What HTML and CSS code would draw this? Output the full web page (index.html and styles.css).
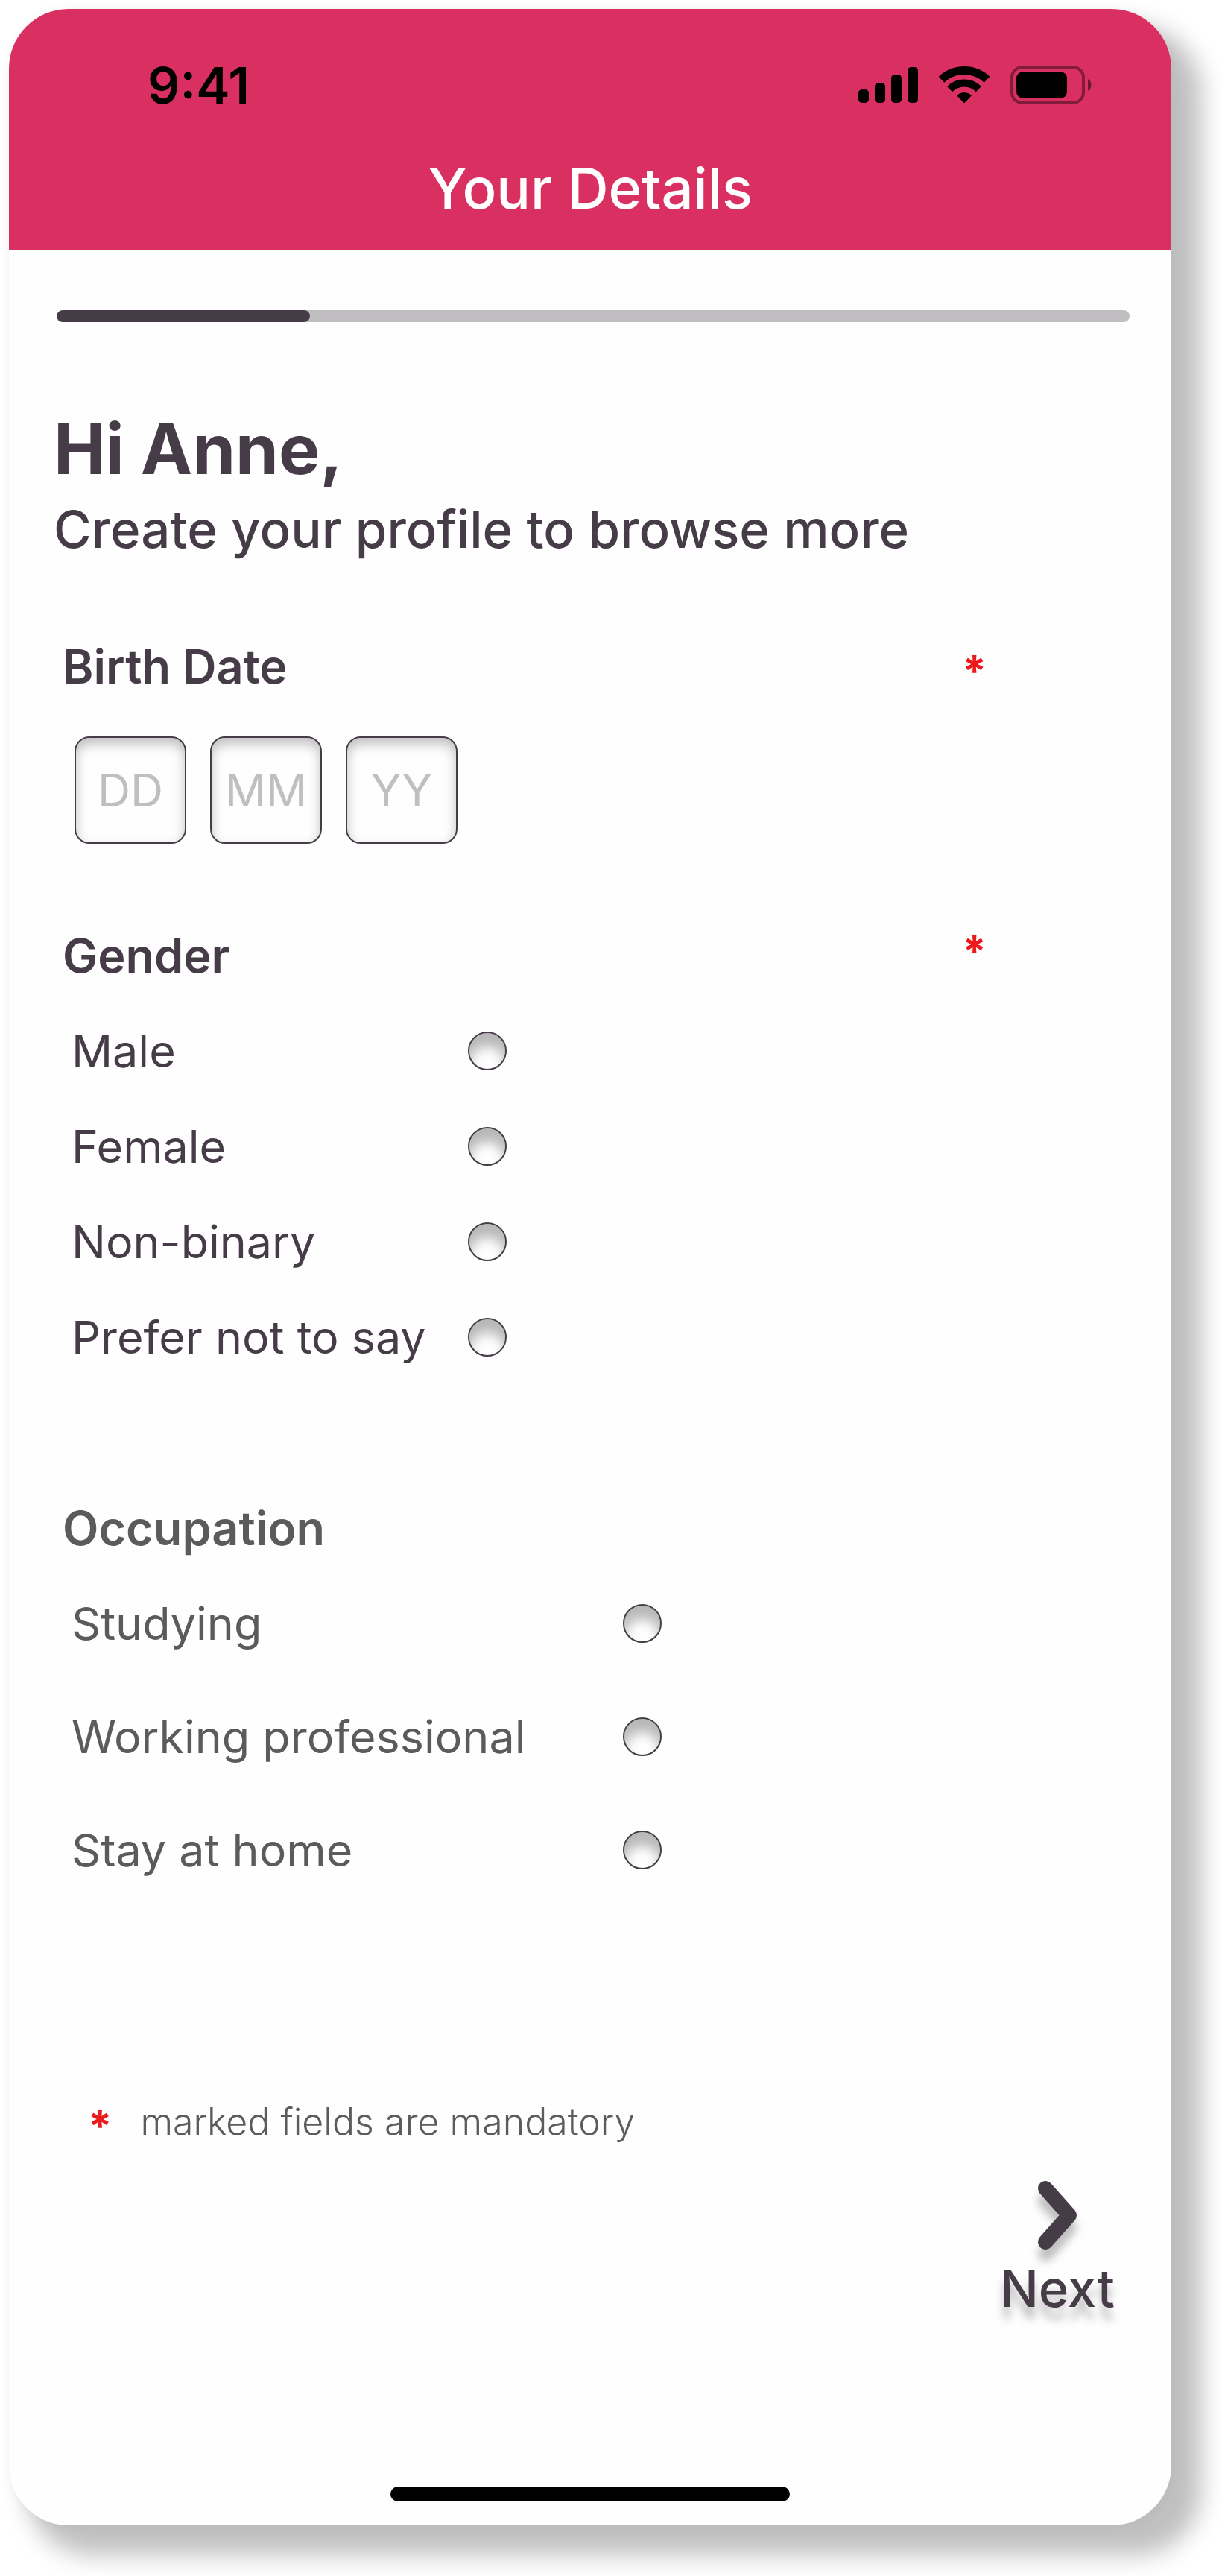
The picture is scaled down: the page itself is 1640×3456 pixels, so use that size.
FILE: index.html
```html
<!DOCTYPE html>
<html lang="en">
  <head>
    <meta charset="utf-8" />
    <title>Your Details</title>
    <meta name="viewport" content="width=device-width, initial-scale=1" />
    <link rel="stylesheet" href="styles.css" />
  </head>
  <body>
    <div class="screen">
      <header class="header">
        <div class="status-bar">
          <span class="time">9:41</span>
          <svg class="status-icons" width="316" height="52" viewBox="0 0 316 52">
            <!-- signal -->
            <rect x="0" y="32" width="14" height="18" rx="5" />
            <rect x="22" y="23" width="14" height="27" rx="5" />
            <rect x="44" y="12" width="14" height="38" rx="5" />
            <rect x="66" y="2" width="14" height="48" rx="5" />
            <!-- wifi -->
            <path d="M111.500 18.700A44.500 44.500 0 0 1 172.500 18.700" fill="none" stroke="#000" stroke-width="11" />
            <path d="M122.600 31.600A27.500 27.500 0 0 1 161.400 31.600" fill="none" stroke="#000" stroke-width="10" />
            <path d="M142 50L132.500 40A15 15 0 0 1 151.500 40Z" stroke="#000" stroke-width="1" stroke-linejoin="round" />
            <!-- battery -->
            <rect x="206" y="2" width="96" height="48" rx="14" fill="none" stroke="#000" stroke-width="4" opacity="0.4" />
            <path d="M308 18c6 3 6 13 0 16z" opacity="0.5" />
            <rect x="212" y="8" width="68" height="36" rx="9" />
          </svg>
        </div>
        <h1 class="title">Your Details</h1>
      </header>

      <form class="content">
        <progress class="progress" value="17" max="72" aria-label="Profile progress"></progress>

        <h2 class="greeting">Hi Anne,</h2>
        <p class="intro">Create your profile to browse more</p>

        <section class="field">
          <div class="field-head">
            <h3 id="birth">Birth Date</h3>
            <span class="required">*</span>
          </div>
          <div class="date" role="group" aria-labelledby="birth">
            <input type="text" placeholder="DD" maxlength="2" aria-label="Day" />
            <input type="text" placeholder="MM" maxlength="2" aria-label="Month" />
            <input type="text" placeholder="YY" maxlength="2" aria-label="Year" />
          </div>
        </section>

        <section class="field gender" role="radiogroup" aria-labelledby="gender">
          <div class="field-head">
            <h3 id="gender">Gender</h3>
            <span class="required">*</span>
          </div>
          <div class="option">
            <label for="male">Male</label>
            <input type="radio" name="gender" id="male" />
          </div>
          <div class="option">
            <label for="female">Female</label>
            <input type="radio" name="gender" id="female" />
          </div>
          <div class="option">
            <label for="nonbinary">Non-binary</label>
            <input type="radio" name="gender" id="nonbinary" />
          </div>
          <div class="option">
            <label for="private">Prefer not to say</label>
            <input type="radio" name="gender" id="private" />
          </div>
        </section>

        <section class="field occupation" role="radiogroup" aria-labelledby="occupation">
          <div class="field-head">
            <h3 id="occupation">Occupation</h3>
          </div>
          <div class="option">
            <label for="studying">Studying</label>
            <input type="radio" name="occupation" id="studying" />
          </div>
          <div class="option">
            <label for="working">Working professional</label>
            <input type="radio" name="occupation" id="working" />
          </div>
          <div class="option">
            <label for="home">Stay at home</label>
            <input type="radio" name="occupation" id="home" />
          </div>
        </section>

        <p class="note"><span class="required">*</span>marked fields are mandatory</p>

        <button type="button" class="next">
          <svg width="52" height="92" viewBox="0 0 52 92">
            <path d="M10 10L42 46L10 82" />
          </svg>
          Next
        </button>
      </form>

      <div class="home-bar"></div>
    </div>
  </body>
</html>
```
FILE: styles.css
```css
* {
  box-sizing: border-box;
}

body {
  margin: 0;
  padding: 12px 68px 68px 12px;
  background: #fff;
  color: #463c48;
  font-family: Inter, "Liberation Sans", sans-serif;
}

h1,
h2,
h3,
p {
  margin: 0;
}

.screen {
  border-radius: 80px;
  background: #fefefe;
  box-shadow: 32px 32px 32px 8px rgba(0, 0, 0, 0.25), 0 0 16px rgba(0, 0, 0, 0.04);
  padding-bottom: 32px;
}

.header {
  background: #d93061;
  border-radius: 80px 80px 0 0;
  padding-bottom: 48px;
}

.status-bar {
  display: flex;
  justify-content: space-between;
  align-items: center;
  height: 204px;
  padding: 0 104px 0 186px;
  color: #000;
}

.time {
  font-size: 68px;
  font-weight: 600;
}

.title {
  color: #fff;
  font-size: 76px;
  font-weight: 500;
  line-height: 72px;
  text-align: center;
}

.content {
  display: flex;
  flex-direction: column;
  padding: 80px 56px 0 60px;
}

.progress {
  appearance: none;
  width: auto;
  height: 16px;
  border: none;
  border-radius: 8px;
  overflow: hidden;
  margin: 0 0 110px 4px;
}

.progress::-webkit-progress-bar {
  background: #c0bec1;
}

.progress::-webkit-progress-value {
  background: #463c48;
  border-radius: 8px;
}

.greeting {
  font-size: 93px;
  font-weight: 700;
  line-height: 120px;
}

.intro {
  font-size: 69px;
  font-weight: 500;
  line-height: 96px;
  margin-bottom: 104px;
}

.field {
  padding-left: 12px;
}

.field-head {
  display: flex;
  justify-content: space-between;
  align-items: flex-end;
  padding-right: 192px;
}

.field-head h3 {
  font-size: 63px;
  font-weight: 600;
  line-height: 64px;
}

.required {
  color: #ed1a1d;
  font-size: 58px;
  font-weight: 700;
  line-height: 52px;
}

.date {
  display: flex;
  gap: 32px;
  margin-top: 62px;
  padding-left: 16px;
}

.date input {
  width: 150px;
  height: 144px;
  padding: 0;
  border: 2px solid #463c48;
  border-radius: 20px;
  background: #fefefe;
  box-shadow: inset 0 8px 16px rgba(0, 0, 0, 0.25);
  color: #463c48;
  font-family: inherit;
  font-size: 61px;
  text-align: center;
}

.date input::placeholder {
  color: #c0bec0;
}

.gender {
  margin-top: 118px;
}

.gender .field-head {
  align-items: flex-start;
  margin-bottom: 32px;
}

.option {
  display: flex;
  align-items: center;
  height: 128px;
  padding-left: 12px;
  font-size: 61px;
}

.option label {
  width: 532px;
}

.option input {
  appearance: none;
  width: 52px;
  height: 52px;
  margin: 0;
  border: 2px solid #463c48;
  border-radius: 50%;
  box-shadow: inset 0 18px 16px rgba(0, 0, 0, 0.28);
}

.option input:checked {
  background: #463c48;
}

.occupation {
  margin-top: 160px;
  color: #5c5a5a;
}

.occupation .field-head {
  margin-bottom: 20px;
}

.occupation .option {
  height: 152px;
}

.occupation label {
  width: 740px;
}

.note {
  display: flex;
  align-items: flex-end;
  gap: 38px;
  margin-top: 256px;
  padding-left: 46px;
  color: #5c5c5c;
  font-size: 50px;
  font-weight: 300;
  line-height: 64px;
}

.next {
  display: flex;
  flex-direction: column;
  align-items: center;
  align-self: flex-end;
  gap: 16px;
  margin-top: 48px;
  margin-right: 20px;
  padding: 0;
  border: none;
  background: none;
  color: #463c48;
  font-family: inherit;
  font-size: 69px;
  font-weight: 500;
  line-height: 72px;
  filter: drop-shadow(0 16px 6px rgba(0, 0, 0, 0.25));
  cursor: pointer;
}

.next path {
  fill: none;
  stroke: #463c48;
  stroke-width: 20;
  stroke-linecap: round;
  stroke-linejoin: round;
}

.home-bar {
  width: 536px;
  height: 20px;
  margin: 230px auto 0;
  border-radius: 10px;
  background: #000;
}
```
